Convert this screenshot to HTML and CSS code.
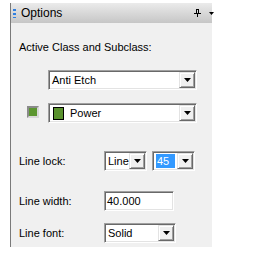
FILE: index.html
```html
<!DOCTYPE html>
<html>
  <head>
    <title>Options</title>
    <link rel="stylesheet" href="styles.css">
  </head>
  <body>
    <div class="panel">
      <div class="titlebar">
        <span class="grip"></span>
        <span class="title">Options</span>
        <svg class="pin" width="7" height="8" viewBox="0 0 7 8">
          <path d="M2 0.5h3M2.5 0.5v4M4.5 0.5v4M0 4.5h7M3.5 4.5v3.5" stroke="#000" stroke-width="1" fill="none"/>
        </svg>
        <svg class="menu" width="5" height="3" viewBox="0 0 5 3">
          <path d="M0 0h5L2.5 3z" fill="#000"/>
        </svg>
      </div>
      <div class="content">
        <div class="heading">Active Class and Subclass:</div>
        <div class="class-row">
          <div class="combo wide">
            <span class="value">Anti Etch</span>
            <span class="drop"><svg width="7" height="4" viewBox="0 0 7 4"><path d="M0 0h7L3.5 4z" fill="#000"/></svg></span>
          </div>
        </div>
        <div class="sub-row">
          <span class="color-btn"></span>
          <div class="combo wide">
            <span class="chip"></span>
            <span class="value power">Power</span>
            <span class="drop"><svg width="7" height="4" viewBox="0 0 7 4"><path d="M0 0h7L3.5 4z" fill="#000"/></svg></span>
          </div>
        </div>
        <div class="fields">
          <div class="label lock">Line lock:</div>
          <div class="ctrl lock">
            <div class="combo small">
              <span class="value">Line</span>
              <span class="drop"><svg width="7" height="4" viewBox="0 0 7 4"><path d="M0 0h7L3.5 4z" fill="#000"/></svg></span>
            </div>
            <div class="combo small">
              <span class="value"><span class="selected">45</span></span>
              <span class="drop"><svg width="7" height="4" viewBox="0 0 7 4"><path d="M0 0h7L3.5 4z" fill="#000"/></svg></span>
            </div>
          </div>
          <div class="label width">Line width:</div>
          <div class="ctrl width">
            <div class="edit">40.000</div>
          </div>
          <div class="label font">Line font:</div>
          <div class="ctrl font">
            <div class="combo medium">
              <span class="value">Solid</span>
              <span class="drop"><svg width="7" height="4" viewBox="0 0 7 4"><path d="M0 0h7L3.5 4z" fill="#000"/></svg></span>
            </div>
          </div>
        </div>
      </div>
    </div>
  </body>
</html>
```
FILE: styles.css
```css
body {
  margin: 0;
  background: #fff;
  font-family: "Liberation Sans", Arial, sans-serif;
  font-size: 11px;
  color: #000;
}
.panel {
  margin: 3px 0 0 10px;
  width: 201px;
  height: 244px;
  border-left: 1px solid #7a7a7a;
  background: #f0f0f0;
}
.titlebar {
  display: flex;
  align-items: center;
  height: 20px;
  background: linear-gradient(#ebebeb, #dadada 45%, #c6c6c6);
}
.grip {
  width: 3px;
  height: 9px;
  margin: 0 5px 0 2px;
  background: repeating-linear-gradient(#2f7fe0 0 2px, transparent 2px 4px);
}
.title {
  flex-grow: 1;
  line-height: 20px;
  font-size: 12px;
}
.pin {
  margin-right: 8px;
}
.menu {
  margin-right: -2px;
}
.content {
  padding: 17px 0 0 8px;
}
.heading {
  line-height: 15px;
}
.class-row {
  display: flex;
  margin: 15px 0 0 29px;
}
.sub-row {
  display: flex;
  align-items: flex-start;
  margin: 13px 0 0 8px;
}
.color-btn {
  box-sizing: border-box;
  width: 12px;
  height: 12px;
  margin: 3px 9px 0 0;
  border: 2px solid;
  border-color: #8a8a8a #d8d8d8 #d8d8d8 #8a8a8a;
  background: #5c9630;
}
.combo,
.edit {
  display: flex;
  align-items: center;
  box-sizing: border-box;
  height: 20px;
  border: 1px solid;
  border-color: #a0a0a0 #fff #fff #a0a0a0;
  box-shadow: inset 1px 1px #696969, inset -1px -1px #e3e3e3;
  background: #fff;
}
.combo.wide {
  width: 149px;
}
.combo.small {
  width: 43px;
}
.combo.medium {
  width: 72px;
}
.value {
  flex-grow: 1;
  padding-left: 3px;
  white-space: nowrap;
  overflow: hidden;
}
.value.power {
  padding-left: 6px;
}
.chip {
  box-sizing: border-box;
  width: 11px;
  height: 13px;
  margin-left: 4px;
  border: 1px solid #000;
  background: #5a922e;
}
.selected {
  display: block;
  width: 18px;
  padding-left: 1px;
  line-height: 14px;
  background: #3399ff;
  color: #fff;
}
.drop {
  display: flex;
  align-items: center;
  justify-content: center;
  box-sizing: border-box;
  width: 16px;
  height: 16px;
  margin-right: 1px;
  border: 1px solid;
  border-color: #e3e3e3 #696969 #696969 #e3e3e3;
  box-shadow: inset 1px 1px #fff, inset -1px -1px #a0a0a0;
  background: #f0f0f0;
}
.fields {
  display: grid;
  grid-template-columns: 85px auto;
  margin-top: 28px;
}
.label {
  line-height: 20px;
}
.ctrl {
  display: flex;
  gap: 5px;
}
.label.width,
.ctrl.width {
  margin-top: 20px;
}
.label.font,
.ctrl.font {
  margin-top: 12px;
}
.edit {
  width: 70px;
  padding-left: 2px;
}
```
